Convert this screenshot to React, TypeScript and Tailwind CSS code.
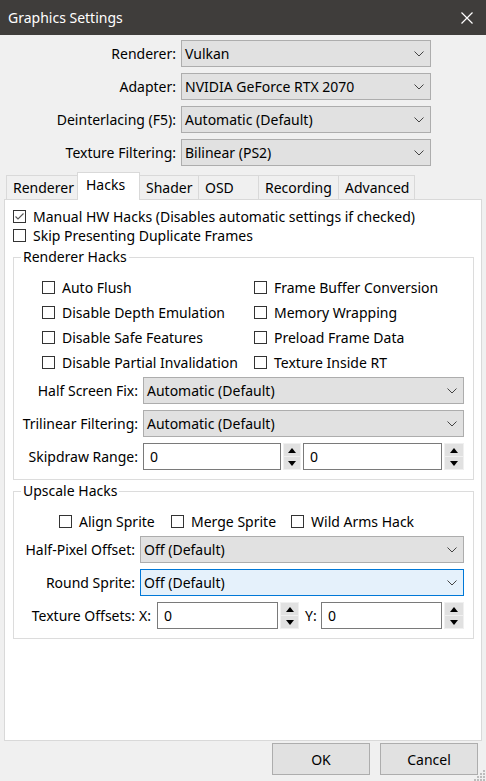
import React from "react";

function Check({ checked = false }: { checked?: boolean }) {
  return (
    <span className="flex h-[13px] w-[13px] shrink-0 items-center justify-center border border-[#333333] bg-white">
      {checked && (
        <svg width="11" height="11" viewBox="0 0 11 11">
          <path d="M1.5 5.5 L4 8 L9.5 2.5" fill="none" stroke="#555" strokeWidth="1.1" />
        </svg>
      )}
    </span>
  );
}

function CheckItem({ label, checked, className = "" }: { label: string; checked?: boolean; className?: string }) {
  return (
    <div className={`flex items-center gap-[7px] ${className}`}>
      <Check checked={checked} />
      <span className="whitespace-nowrap">{label}</span>
    </div>
  );
}

function Chevron() {
  return (
    <svg width="10" height="6" viewBox="0 0 10 6" className="shrink-0">
      <path d="M0.5 0.5 L5 5 L9.5 0.5" fill="none" stroke="#444" strokeWidth="1" />
    </svg>
  );
}

function Combo({ value, width, focused = false }: { value: string; width: string; focused?: boolean }) {
  return (
    <div
      className={`flex h-[27px] items-center justify-between border pl-[3px] pr-[6px] ${width} ${
        focused ? "border-[#0078d7] bg-[#e5f1fb]" : "border-[#adadad] bg-[#e1e1e1]"
      }`}
    >
      <span className="whitespace-nowrap">{value}</span>
      <Chevron />
    </div>
  );
}

function Spinner({ width }: { width: string }) {
  return (
    <div className={`flex h-[27px] flex-col gap-px bg-[#f0f0f0] p-px ${width}`}>
      <div className="flex flex-1 items-center justify-center bg-[#e1e1e1]">
        <svg width="8" height="5" viewBox="0 0 8 5">
          <path d="M0 5 L4 0 L8 5 Z" fill="#000" />
        </svg>
      </div>
      <div className="flex flex-1 items-center justify-center bg-[#e1e1e1]">
        <svg width="8" height="5" viewBox="0 0 8 5">
          <path d="M0 0 L8 0 L4 5 Z" fill="#000" />
        </svg>
      </div>
    </div>
  );
}

function NumBox({ value, width }: { value: string; width: string }) {
  return (
    <div className={`flex h-[27px] items-center border border-[#7a7a7a] bg-white pl-[6px] ${width}`}>
      {value}
    </div>
  );
}

const tabs = [
  { label: "Renderer", w: "w-[72px]" },
  { label: "Hacks", w: "w-[63px]" },
  { label: "Shader", w: "w-[60px]" },
  { label: "OSD", w: "w-[61px]" },
  { label: "Recording", w: "w-[81px]" },
  { label: "Advanced", w: "w-[77px]" },
];

export default function App() {
  return (
    <div className="relative flex h-[781px] w-[486px] flex-col overflow-hidden bg-[#f0f0f0] font-['Noto_Sans',sans-serif] text-[14px] leading-[19px] text-black">
      {/* title bar */}
      <div className="flex h-[35px] shrink-0 items-center justify-between bg-[#3f3d3b] pl-[8px] pr-[13px] text-white">
        <span className="text-[14px]">Graphics Settings</span>
        <svg width="12" height="12" viewBox="0 0 12 12">
          <path d="M0.5 0.5 L11.5 11.5 M11.5 0.5 L0.5 11.5" stroke="#fff" strokeWidth="1.2" />
        </svg>
      </div>

      {/* top options */}
      <div className="mt-[5px] grid grid-cols-[176px_250px] items-center gap-x-[5px] gap-y-[6px]">
        <span className="text-right">Renderer:</span>
        <Combo value="Vulkan" width="w-[250px]" />
        <span className="text-right">Adapter:</span>
        <Combo value="NVIDIA GeForce RTX 2070" width="w-[250px]" />
        <span className="text-right">Deinterlacing (F5):</span>
        <Combo value="Automatic (Default)" width="w-[250px]" />
        <span className="text-right">Texture Filtering:</span>
        <Combo value="Bilinear (PS2)" width="w-[250px]" />
      </div>

      {/* tabs */}
      <div className="mt-[6px] flex h-[27px] items-end pl-[6px]">
        {tabs.map((t, i) =>
          t.label === "Hacks" ? (
            <div
              key={t.label}
              className={`relative z-10 -mb-px -ml-px flex h-[28px] ${t.w} items-start border border-b-0 border-[#d9d9d9] bg-white pl-[8px] pt-[2px]`}
            >
              {t.label}
            </div>
          ) : (
            <div
              key={t.label}
              className={`flex h-[24px] ${t.w} ${i > 0 ? "-ml-px" : ""} items-center border border-b-0 border-[#d9d9d9] bg-[#f0f0f0] pl-[6px]`}
            >
              {t.label}
            </div>
          )
        )}
      </div>

      {/* tab panel */}
      <div className="mx-[4px] flex h-[542px] flex-col border border-[#d9d9d9] bg-white pl-[8px] pr-[7px] pt-[7px]">
        <div className="flex h-[19px] items-center">
          <CheckItem label="Manual HW Hacks (Disables automatic settings if checked)" checked />
        </div>
        <div className="flex h-[19px] items-center">
          <CheckItem label="Skip Presenting Duplicate Frames" />
        </div>

        <fieldset className="mt-[2px] border border-[#dcdcdc] pb-[9px] pr-[9px]">
          <legend className="ml-[7px] px-[2px] leading-[20px]">Renderer Hacks</legend>
          <div className="grid grid-cols-[212px_auto] pl-[28px] pt-[8px]">
            <CheckItem label="Auto Flush" className="h-[25px]" />
            <CheckItem label="Frame Buffer Conversion" className="h-[25px]" />
            <CheckItem label="Disable Depth Emulation" className="h-[25px]" />
            <CheckItem label="Memory Wrapping" className="h-[25px]" />
            <CheckItem label="Disable Safe Features" className="h-[25px]" />
            <CheckItem label="Preload Frame Data" className="h-[25px]" />
            <CheckItem label="Disable Partial Invalidation" className="h-[25px]" />
            <CheckItem label="Texture Inside RT" className="h-[25px]" />
          </div>
          <div className="mt-[2px] flex flex-col gap-[6px]">
            <div className="flex items-center gap-[5px]">
              <span className="w-[124px] text-right">Half Screen Fix:</span>
              <Combo value="Automatic (Default)" width="w-[321px]" />
            </div>
            <div className="flex items-center gap-[5px]">
              <span className="w-[124px] text-right">Trilinear Filtering:</span>
              <Combo value="Automatic (Default)" width="w-[321px]" />
            </div>
            <div className="flex items-center">
              <span className="mr-[5px] w-[124px] text-right">Skipdraw Range:</span>
              <NumBox value="0" width="w-[138px]" />
              <div className="w-[2px]" />
              <Spinner width="w-[18px]" />
              <div className="w-[2px]" />
              <NumBox value="0" width="w-[139px]" />
              <div className="w-[2px]" />
              <Spinner width="w-[20px]" />
            </div>
          </div>
        </fieldset>

        <fieldset className="mt-[1px] border border-[#dcdcdc] pb-[9px] pr-[9px]">
          <legend className="ml-[7px] px-[2px] leading-[20px]">Upscale Hacks</legend>
          <div className="mt-[8px] flex h-[25px] items-center pl-[45px]">
            <CheckItem label="Align Sprite" className="w-[112px]" />
            <CheckItem label="Merge Sprite" className="w-[120px]" />
            <CheckItem label="Wild Arms Hack" />
          </div>
          <div className="mt-[2px] flex flex-col gap-[6px]">
            <div className="flex items-center gap-[5px]">
              <span className="w-[121px] text-right">Half-Pixel Offset:</span>
              <Combo value="Off (Default)" width="w-[324px]" />
            </div>
            <div className="flex items-center gap-[5px]">
              <span className="w-[121px] text-right">Round Sprite:</span>
              <Combo value="Off (Default)" width="w-[324px]" focused />
            </div>
            <div className="flex items-center">
              <span className="w-[121px] text-right">Texture Offsets:</span>
              <span className="w-[22px] pl-[4px]">X:</span>
              <NumBox value="0" width="w-[121px]" />
              <div className="w-[2px]" />
              <Spinner width="w-[19px]" />
              <span className="w-[22px] pl-[6px]">Y:</span>
              <NumBox value="0" width="w-[121px]" />
              <div className="w-[2px]" />
              <Spinner width="w-[20px]" />
            </div>
          </div>
        </fieldset>
      </div>

      {/* dialog buttons */}
      <div className="mt-[2px] flex justify-end gap-[10px] pr-[8px]">
        <button className="h-[32px] w-[98px] border border-[#adadad] bg-[#e1e1e1]">OK</button>
        <button className="h-[32px] w-[98px] border border-[#adadad] bg-[#e1e1e1]">Cancel</button>
      </div>

      {/* size grip */}
      <svg width="12" height="12" viewBox="0 0 12 12" className="absolute bottom-0 right-0">
        <rect x="9" y="1" width="2" height="2" fill="#bcbcbc" />
        <rect x="6" y="4" width="2" height="2" fill="#bcbcbc" />
        <rect x="9" y="4" width="2" height="2" fill="#bcbcbc" />
        <rect x="3" y="7" width="2" height="2" fill="#bcbcbc" />
        <rect x="6" y="7" width="2" height="2" fill="#bcbcbc" />
        <rect x="9" y="7" width="2" height="2" fill="#bcbcbc" />
        <rect x="0" y="10" width="2" height="2" fill="#bcbcbc" />
        <rect x="3" y="10" width="2" height="2" fill="#bcbcbc" />
        <rect x="6" y="10" width="2" height="2" fill="#bcbcbc" />
        <rect x="9" y="10" width="2" height="2" fill="#bcbcbc" />
      </svg>
    </div>
  );
}
